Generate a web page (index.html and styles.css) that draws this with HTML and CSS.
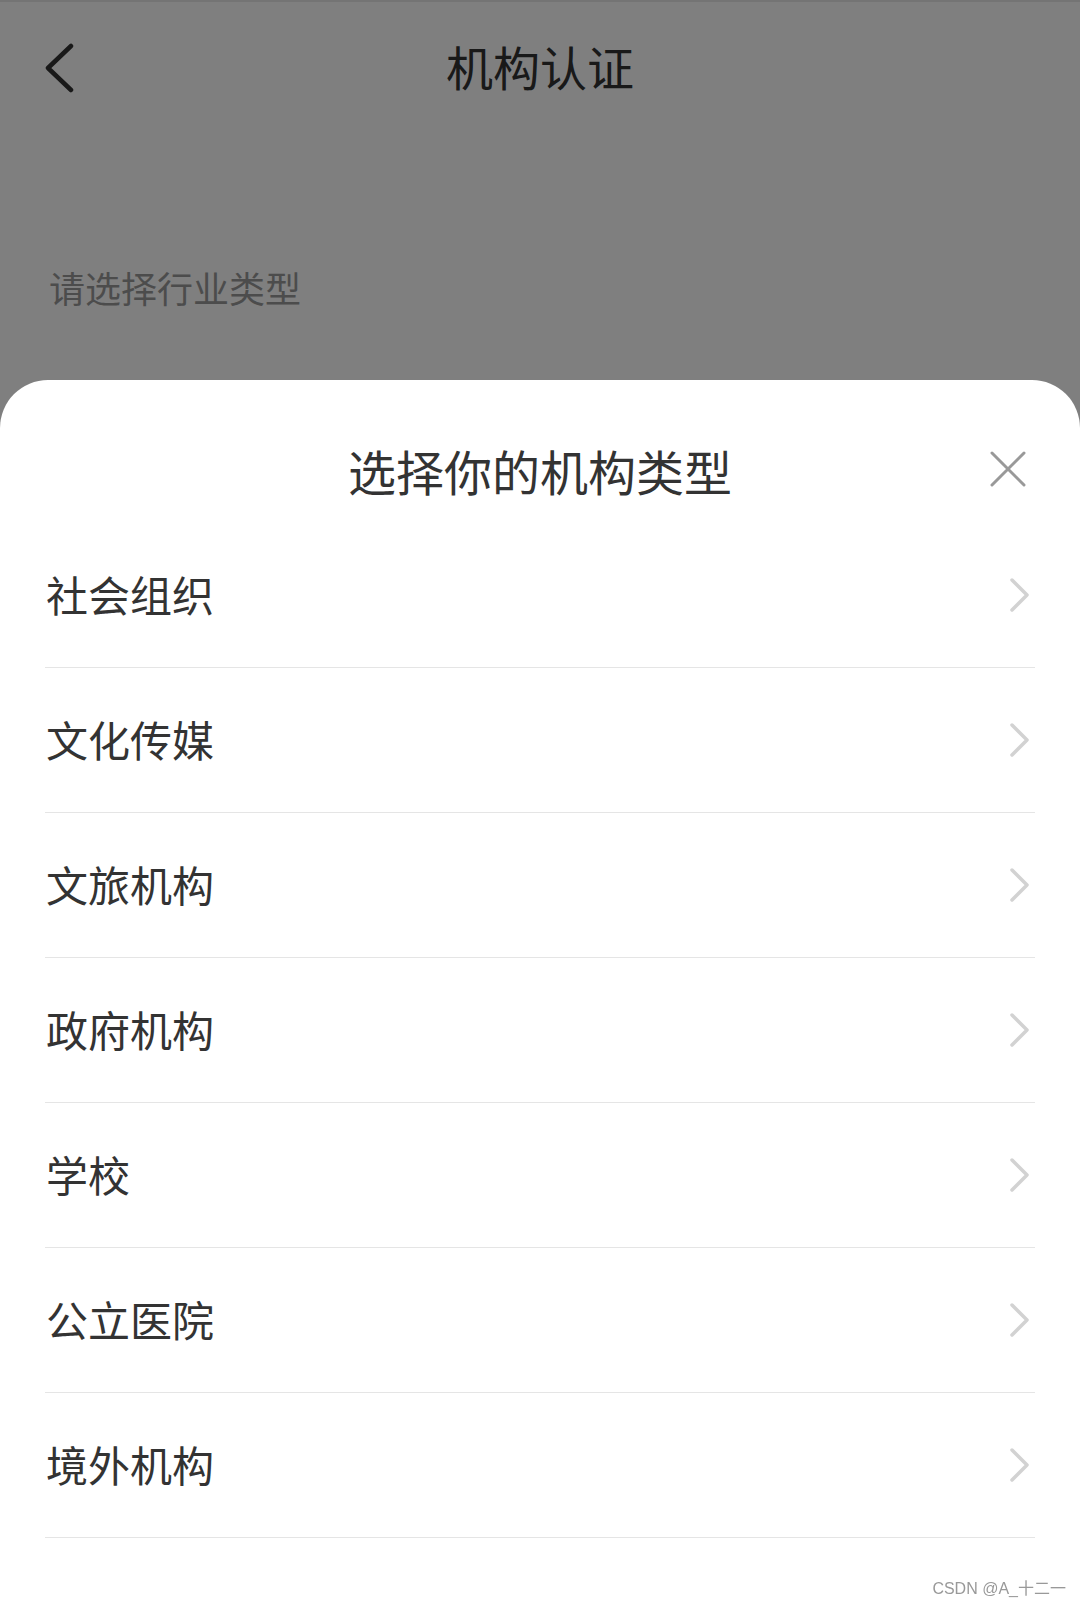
FILE: index.html
```html
<!DOCTYPE html>
<html lang="zh-CN">
<head>
    <meta charset="UTF-8">
    <meta name="viewport" content="width=device-width, initial-scale=1.0">
    <title>机构认证</title>
    <link rel="stylesheet" href="styles.css">
</head>
<body>
    <div class="page">
        <div class="nav-bar">
            <span class="nav-back">
                <svg width="32" height="50" viewBox="0 0 32 50"><polyline points="28,3 5,25 28,47" fill="none" stroke="#333" stroke-width="4.5" stroke-linecap="round" stroke-linejoin="round"/></svg>
            </span>
            <h1 class="nav-title">机构认证</h1>
            <span></span>
        </div>
        <div class="field-label">请选择行业类型</div>
    </div>

    <div class="mask"></div>

    <div class="sheet">
        <div class="sheet-header">
            <span></span>
            <h2 class="sheet-title">选择你的机构类型</h2>
            <span class="sheet-close">
                <svg width="36" height="36" viewBox="0 0 36 36"><path d="M2 2 L34 34 M34 2 L2 34" stroke="#999" stroke-width="3" stroke-linecap="round"/></svg>
            </span>
        </div>
        <ul class="type-list">
            <li class="type-item"><span>社会组织</span><svg class="arrow" width="22" height="36" viewBox="0 0 22 36"><polyline points="4,3 19,18 4,33" fill="none" stroke="#d2d2d2" stroke-width="3.5" stroke-linecap="round" stroke-linejoin="round"/></svg></li>
            <li class="type-item"><span>文化传媒</span><svg class="arrow" width="22" height="36" viewBox="0 0 22 36"><polyline points="4,3 19,18 4,33" fill="none" stroke="#d2d2d2" stroke-width="3.5" stroke-linecap="round" stroke-linejoin="round"/></svg></li>
            <li class="type-item"><span>文旅机构</span><svg class="arrow" width="22" height="36" viewBox="0 0 22 36"><polyline points="4,3 19,18 4,33" fill="none" stroke="#d2d2d2" stroke-width="3.5" stroke-linecap="round" stroke-linejoin="round"/></svg></li>
            <li class="type-item"><span>政府机构</span><svg class="arrow" width="22" height="36" viewBox="0 0 22 36"><polyline points="4,3 19,18 4,33" fill="none" stroke="#d2d2d2" stroke-width="3.5" stroke-linecap="round" stroke-linejoin="round"/></svg></li>
            <li class="type-item"><span>学校</span><svg class="arrow" width="22" height="36" viewBox="0 0 22 36"><polyline points="4,3 19,18 4,33" fill="none" stroke="#d2d2d2" stroke-width="3.5" stroke-linecap="round" stroke-linejoin="round"/></svg></li>
            <li class="type-item"><span>公立医院</span><svg class="arrow" width="22" height="36" viewBox="0 0 22 36"><polyline points="4,3 19,18 4,33" fill="none" stroke="#d2d2d2" stroke-width="3.5" stroke-linecap="round" stroke-linejoin="round"/></svg></li>
            <li class="type-item"><span>境外机构</span><svg class="arrow" width="22" height="36" viewBox="0 0 22 36"><polyline points="4,3 19,18 4,33" fill="none" stroke="#d2d2d2" stroke-width="3.5" stroke-linecap="round" stroke-linejoin="round"/></svg></li>
        </ul>
        <div class="watermark">CSDN @A_十二一</div>
    </div>
</body>
</html>
```

FILE: styles.css
```css
body {
    margin: 0;
    padding: 0;
    background-color: #fff;
    font-family: "Noto Sans CJK SC", "Noto Sans", sans-serif;
    color: #333;
    overflow: hidden;
}
.page {
    height: 100vh;
    border-top: 2px solid #e8e8e8;
    box-sizing: border-box;
}
.nav-bar {
    display: grid;
    grid-template-columns: 1fr auto 1fr;
    align-items: center;
    height: 126px;
    padding: 0 43px 10px;
}
.nav-back {
    display: flex;
    align-items: center;
    margin-top: 6px;
}
.nav-title {
    margin: 0;
    font-size: 47px;
    font-weight: normal;
    line-height: 47px;
    color: #333;
}
.field-label {
    margin-top: 131px;
    padding-left: 49px;
    font-size: 36px;
    line-height: 36px;
    color: #999;
}
.mask {
    position: fixed;
    top: 0;
    left: 0;
    right: 0;
    bottom: 0;
    background-color: rgba(0, 0, 0, 0.5);
}
.sheet {
    position: fixed;
    top: 380px;
    left: 0;
    right: 0;
    bottom: 0;
    background-color: #fff;
    border-radius: 48px 48px 0 0;
}
.sheet-header {
    display: grid;
    grid-template-columns: 1fr auto 1fr;
    align-items: center;
    padding: 66px 0 29px;
}
.sheet-title {
    margin: 0;
    font-size: 48px;
    font-weight: normal;
    line-height: 48px;
    color: #333;
}
.sheet-close {
    justify-self: end;
    display: flex;
    margin-right: 54px;
    margin-top: -2px;
}
.type-list {
    list-style: none;
    margin: 0;
    padding: 0 45px;
}
.type-item {
    display: flex;
    align-items: center;
    justify-content: space-between;
    height: 144px;
    padding-right: 5px;
    border-bottom: 1px solid #e5e5e5;
    font-size: 42px;
    color: #333;
}
.type-item span {
    padding: 0 0 4px 1px;
}
.watermark {
    position: absolute;
    right: 14px;
    bottom: 8px;
    font-family: "Liberation Sans", "Noto Sans CJK SC", sans-serif;
    font-size: 16px;
    color: #999;
}
```
